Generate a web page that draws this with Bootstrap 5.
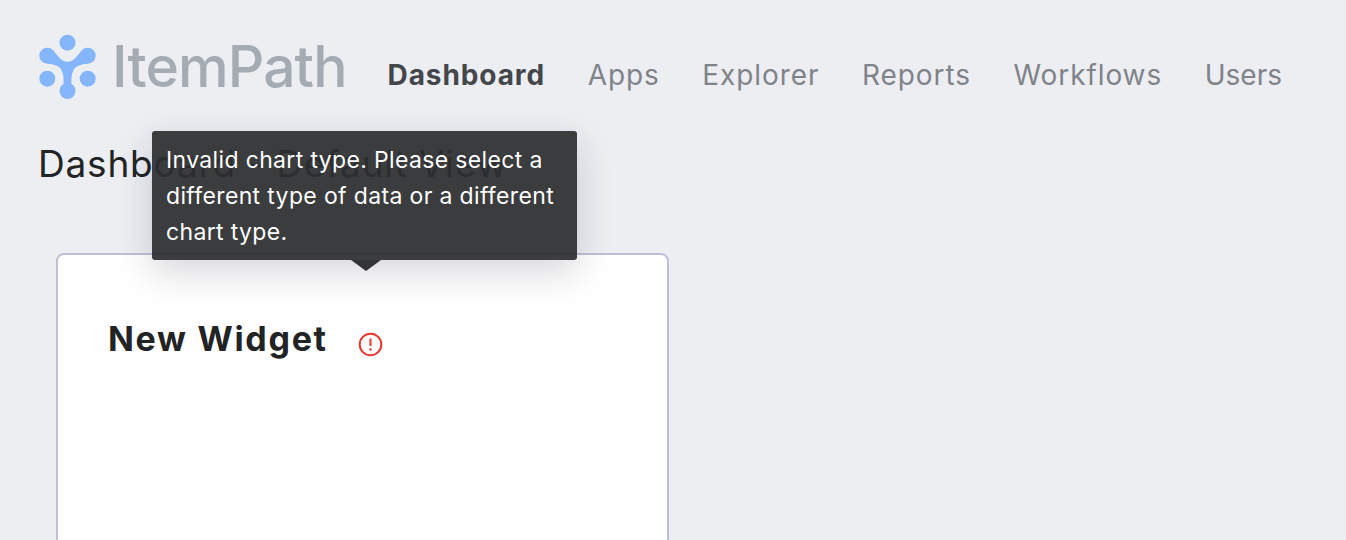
<!DOCTYPE html>
<html lang="en">
<head>
    <meta charset="UTF-8">
    <meta name="viewport" content="width=device-width, initial-scale=1.0">
    <title>ItemPath Dashboard</title>
    <link href="https://cdn.jsdelivr.net/npm/bootstrap@5.3.0/dist/css/bootstrap.min.css" rel="stylesheet">
    <style>
        html, body { height: 100%; overflow: hidden; }
        body { background: #edeef2; font-family: "Inter", "Liberation Sans", sans-serif; color: #212325; }
        .top-bar { padding: 34px 0 0 39px; height: 131px; align-items: flex-start; }
        .brand-logo { gap: 13px; margin-right: 41px; height: 66px; }
        .brand-logo svg { width: 60px; height: 66px; flex: none; }
        .brand-name { font-size: 57px; line-height: 66px; color: #a5abb3; letter-spacing: -.9px; font-weight: 500; }
        .main-nav { gap: 42.7px; padding-top: 18px; }
        .main-nav a { font-size: 28px; line-height: 46px; letter-spacing: .9px; color: #808388; text-decoration: none; }
        .main-nav a:last-child { letter-spacing: 0; }
        .main-nav a.active { color: #43474b; font-weight: 700; }
        .page-title { font-size: 37px; line-height: 44px; font-weight: 400; letter-spacing: .8px; margin: 0; padding: 11px 0 0 38px; height: 122px; }
        .widget-wrap { padding-left: 56px; }
        .widget-box { width: 613px; height: 400px; background: #fff; border: 2px solid #bebfd6; border-radius: 8px; padding: 62px 50px; }
        .widget-title { font-size: 34px; line-height: 44px; font-weight: 700; letter-spacing: 1.7px; margin: 0; gap: 30px; color: #212325; }
        .widget-title svg { width: 25px; height: 25px; margin-top: 15px; flex: none; }
        .tip-box { position: absolute; left: 152px; top: 131px; width: 425px; height: 129px; padding: 11px 14px; background: rgba(45,46,48,.93); color: #fff; border-radius: 3px; font-size: 23px; line-height: 36px; letter-spacing: .35px; box-shadow: 0 12px 36px rgba(30,30,50,.18); }
        .tip-box::after { content: ""; position: absolute; left: 199px; top: 100%; border: 15px solid transparent; border-top: 11px solid #333436; border-bottom: 0; }
    </style>
</head>
<body>
    <nav class="d-flex top-bar">
        <div class="d-flex brand-logo">
            <svg viewBox="0 0 60 66" xmlns="http://www.w3.org/2000/svg">
                <g fill="#85b6fb">
                    <circle cx="28.5" cy="8.7" r="8"/>
                    <circle cx="8.3" cy="44.7" r="8"/>
                    <circle cx="48.7" cy="44.7" r="8"/>
                    <circle cx="8.3" cy="21.7" r="8"/>
                    <circle cx="48.7" cy="21.7" r="8"/>
                    <circle cx="28.5" cy="57" r="8"/>
                    <path d="M14 16C19 22 22 27.7 28.5 27.7C35 27.7 38 22 43 16L48.7 29.7C44 30 40 31 37 33C33 37 32 42 32.5 52H24.5C25 42 24 37 20 33C17 31 13 30 8.3 29.7Z"/>
                </g>
            </svg>
            <span class="brand-name">ItemPath</span>
        </div>
        <div class="d-flex main-nav">
            <a class="active" href="#">Dashboard</a>
            <a href="#">Apps</a>
            <a href="#">Explorer</a>
            <a href="#">Reports</a>
            <a href="#">Workflows</a>
            <a href="#">Users</a>
        </div>
    </nav>
    <h1 class="page-title">Dashboard - Default View</h1>
    <div class="widget-wrap">
        <div class="widget-box">
            <h2 class="d-flex widget-title">New Widget
                <svg viewBox="0 0 25 25" xmlns="http://www.w3.org/2000/svg">
                    <circle cx="12.5" cy="12.5" r="10.8" fill="none" stroke="#e8372c" stroke-width="2"/>
                    <path d="M12.5 6.5V14" stroke="#e8372c" stroke-width="2" fill="none"/>
                    <circle cx="12.5" cy="17.5" r="1.2" fill="#e8372c"/>
                </svg>
            </h2>
        </div>
    </div>
    <div class="tip-box">Invalid chart type. Please select a different type of data or a different chart type.</div>
</body>
</html>
